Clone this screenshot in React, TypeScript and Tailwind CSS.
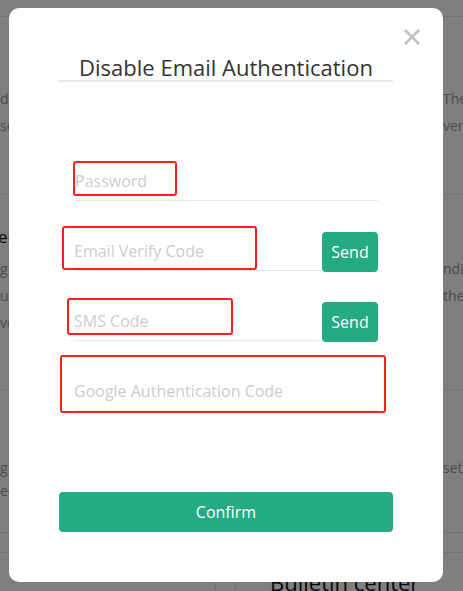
import React from "react";

function BgLine({ left, right }: { left: string; right: string }) {
  return (
    <div className="grid grid-cols-[443px_20px] whitespace-nowrap overflow-hidden text-[14px] leading-[27px] text-[#999]">
      <span>{left}</span>
      <span>{right}</span>
    </div>
  );
}

function RedBox({ cls }: { cls: string }) {
  return <div className={`absolute border-2 border-[#ff1e1e] rounded-[3px] pointer-events-none ${cls}`} />;
}

export default function App() {
  return (
    <div className="relative w-[463px] h-[591px] overflow-hidden bg-white font-['Open_Sans','Noto_Sans',sans-serif]">
      {/* page behind */}
      <div className="flex flex-col">
        <div className="h-[17px] border-b border-[#e5e5e5]" />
        <div className="h-[178px] border-b border-[#e5e5e5] flex flex-col pt-[68px]">
          <BgLine left="d" right="The" />
          <BgLine left="se" right="ven" />
        </div>
        <div className="h-[195px] border-b border-[#e5e5e5] flex flex-col pt-[28px]">
          <div className="text-[17px] leading-[28px] text-[#222] whitespace-nowrap ml-[-2px]">er</div>
          <div className="h-[4px]" />
          <BgLine left="g" right="ndi" />
          <BgLine left="u" right="the" />
          <BgLine left="ve" right="" />
        </div>
        <div className="h-[143px] border-b border-[#e5e5e5] flex flex-col pt-[66px]">
          <div className="grid grid-cols-[443px_20px] whitespace-nowrap overflow-hidden text-[14px] leading-[23px] text-[#999]">
            <span>g</span>
            <span>sett</span>
          </div>
          <div className="grid grid-cols-[443px_20px] whitespace-nowrap overflow-hidden text-[14px] leading-[23px] text-[#999]">
            <span>ee</span>
            <span></span>
          </div>
        </div>
        <div className="h-[20px] border-b border-[#e5e5e5]" />
        <div className="flex h-[40px]">
          <div className="w-[216px] border-r border-[#e5e5e5]" />
          <div className="w-[20px] border-r border-[#e5e5e5]" />
          <div className="pl-[34px] pt-[14px] text-[22px] leading-[30px] text-[#111] whitespace-nowrap">Bulletin center</div>
        </div>
      </div>

      {/* overlay */}
      <div className="absolute inset-0 bg-black/50" />

      {/* modal */}
      <div className="absolute left-[9px] top-[8px] w-[434px] h-[574px] bg-white rounded-[10px] px-[50px] flex flex-col">
        <button className="absolute top-[21px] right-[23px] w-[16px] h-[16px] text-[#c3c3c3]">
          <svg viewBox="0 0 16 16" width="16" height="16" fill="none" stroke="currentColor" strokeWidth="2.8" strokeLinecap="square">
            <path d="M2 2L14 14M14 2L2 14" />
          </svg>
        </button>

        <div className="mt-[47px] text-center text-[22px] leading-[25px] text-[#333] border-b-2 border-[#e6eaef]">
          Disable Email Authentication
        </div>

        <div className="px-[15px] flex flex-col gap-[30px] mt-[79px]">
          <div className="relative h-[40px] border-b border-[#e8e8e8] flex items-center">
            <span className="text-[16px] text-[#cccccc] pl-[1px]">Password</span>
            <RedBox cls="left-[-1px] top-0 w-[104px] h-[35px]" />
          </div>
          <div className="relative flex h-[40px]">
            <div className="flex-1 border-b border-[#e8e8e8] flex items-center">
              <span className="text-[16px] text-[#cccccc]">Email Verify Code</span>
            </div>
            <div className="w-[56px] h-[40px] mt-[1px] rounded-[4px] bg-[#24ab83] text-white text-[16px] flex items-center justify-center">Send</div>
            <RedBox cls="left-[-12px] top-[-5px] w-[195px] h-[44px]" />
          </div>
          <div className="relative flex h-[40px]">
            <div className="flex-1 border-b border-[#e8e8e8] flex items-center">
              <span className="text-[16px] text-[#cccccc]">SMS Code</span>
            </div>
            <div className="w-[56px] h-[40px] mt-[1px] rounded-[4px] bg-[#24ab83] text-white text-[16px] flex items-center justify-center">Send</div>
            <RedBox cls="left-[-7px] top-[-3px] w-[166px] h-[37px]" />
          </div>
          <div className="relative h-[40px] border-b border-[#e8e8e8] flex items-center">
            <span className="text-[16px] text-[#cccccc]">Google Authentication Code</span>
            <RedBox cls="left-[-14px] top-[-16px] w-[326px] h-[58px]" />
          </div>
        </div>

        <button className="mt-[81px] h-[40px] w-full rounded-[4px] bg-[#24ab83] text-white text-[16px] flex items-center justify-center">
          Confirm
        </button>
      </div>
    </div>
  );
}
